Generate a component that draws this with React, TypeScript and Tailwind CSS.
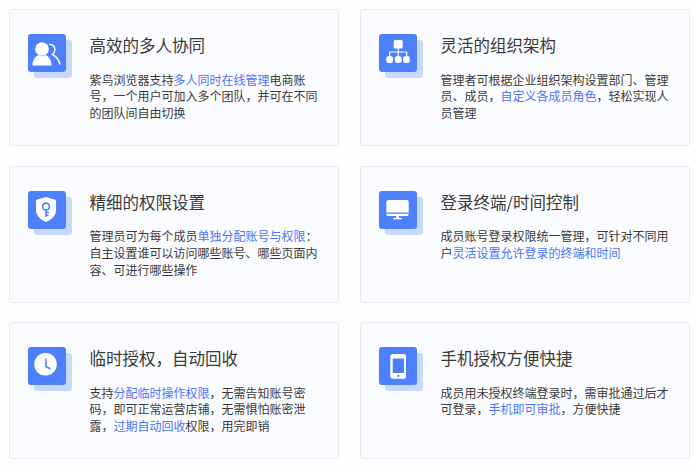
import React from 'react';

type Seg = { t: string; link?: boolean };
type Feature = { title: string; icon: React.ReactNode; lines: Seg[][]; };

const UsersIcon = (
  <svg viewBox="0 0 38 38" className="h-[38px] w-[38px]">
    <circle cx="14" cy="15" r="6.8" fill="#fff" />
    <path d="M4.500 31.500c0-5.500 2.500-9 6-10.500 2 1.500 5 1.500 7 0 3.500 1.500 6 5 6 10.500z" fill="#fff" />
    <path d="M21.500 10.500c3.500-.5 5.500 2.500 5.500 5 0 2.500-1.500 4-2.500 5 3.500 2 6.500 5.500 7.500 10" fill="none" stroke="#fff" strokeWidth="1.500" />
  </svg>
);

const OrgIcon = (
  <svg viewBox="0 0 38 38" className="h-[38px] w-[38px]">
    <rect x="14.700" y="6" width="9" height="8.500" rx="1.500" fill="#fff" />
    <path d="M19.200 14v8M10.700 23v-5h17v5" fill="none" stroke="#fff" strokeWidth="1.100" />
    <rect x="7.300" y="22" width="6.800" height="7" rx="2.800" fill="#fff" />
    <rect x="15.800" y="22" width="6.800" height="7" rx="2.800" fill="#fff" />
    <rect x="24" y="22" width="6.800" height="7" rx="2.800" fill="#fff" />
  </svg>
);

const ShieldIcon = (
  <svg viewBox="0 0 38 38" className="h-[38px] w-[38px]">
    <path d="M18 6l10 3v10c0 6-4.500 9.500-10 12-5.500-2.500-10-6-10-12V9z" fill="#fff" />
    <circle cx="18" cy="15.500" r="3.400" fill="none" stroke="#4d80ff" strokeWidth="1.600" />
    <path d="M18 19v7M18 21.500h3M18 24.200h2.500" fill="none" stroke="#4d80ff" strokeWidth="1.500" />
  </svg>
);

const MonitorIcon = (
  <svg viewBox="0 0 38 38" className="h-[38px] w-[38px]">
    <path d="M9.300 9h18.400a2 2 0 0 1 2 2v10.500H7.300V11a2 2 0 0 1 2-2z" fill="#fff" />
    <path d="M7.300 22.700h22.400v.3a2 2 0 0 1-2 2H9.300a2 2 0 0 1-2-2z" fill="#fff" />
    <rect x="17" y="25" width="3" height="2" fill="#fff" />
    <rect x="14.300" y="27" width="8.400" height="1.300" fill="#fff" />
  </svg>
);

const ClockIcon = (
  <svg viewBox="0 0 38 38" className="h-[38px] w-[38px]">
    <circle cx="17.500" cy="17.200" r="11.300" fill="#fff" />
    <path d="M18 11.500v8l4.500 2.500" fill="none" stroke="#4d80ff" strokeWidth="1.500" />
  </svg>
);

const PhoneIcon = (
  <svg viewBox="0 0 38 38" className="h-[38px] w-[38px]">
    <rect x="11.300" y="7" width="15.700" height="24.700" rx="2.500" fill="#fff" />
    <rect x="13.700" y="11.500" width="11.300" height="14.500" fill="#4d80ff" />
    <rect x="18.300" y="28" width="2" height="1.800" fill="#4d80ff" />
  </svg>
);

const features: Feature[] = [
  {
    title: '高效的多人协同',
    icon: UsersIcon,
    lines: [
      [{ t: '紫鸟浏览器支持' }, { t: '多人同时在线管理', link: true }, { t: '电商账' }],
      [{ t: '号，一个用户可加入多个团队，并可在不同' }],
      [{ t: '的团队间自由切换' }],
    ],
  },
  {
    title: '灵活的组织架构',
    icon: OrgIcon,
    lines: [
      [{ t: '管理者可根据企业组织架构设置部门、管理' }],
      [{ t: '员、成员，' }, { t: '自定义各成员角色', link: true }, { t: '，轻松实现人' }],
      [{ t: '员管理' }],
    ],
  },
  {
    title: '精细的权限设置',
    icon: ShieldIcon,
    lines: [
      [{ t: '管理员可为每个成员' }, { t: '单独分配账号与权限', link: true }, { t: '：' }],
      [{ t: '自主设置谁可以访问哪些账号、哪些页面内' }],
      [{ t: '容、可进行哪些操作' }],
    ],
  },
  {
    title: '登录终端/时间控制',
    icon: MonitorIcon,
    lines: [
      [{ t: '成员账号登录权限统一管理，可针对不同用' }],
      [{ t: '户' }, { t: '灵活设置允许登录的终端和时间', link: true }],
    ],
  },
  {
    title: '临时授权，自动回收',
    icon: ClockIcon,
    lines: [
      [{ t: '支持' }, { t: '分配临时操作权限', link: true }, { t: '，无需告知账号密' }],
      [{ t: '码，即可正常运营店铺，无需惧怕账密泄' }],
      [{ t: '露，' }, { t: '过期自动回收', link: true }, { t: '权限，用完即销' }],
    ],
  },
  {
    title: '手机授权方便快捷',
    icon: PhoneIcon,
    lines: [
      [{ t: '成员用未授权终端登录时，需审批通过后才' }],
      [{ t: '可登录，' }, { t: '手机即可审批', link: true }, { t: '，方便快捷' }],
    ],
  },
];

const FeatureCard = ({ item }: { item: Feature }) => (
  <div className="flex h-[137px] w-[330px] rounded-[3px] border border-[#e9ebf3] bg-[#fbfcff] pl-[18px] pt-[24px]">
    <div className="relative h-[44px] w-[44px] shrink-0">
      <div className="absolute left-[6px] top-[6px] h-[38px] w-[38px] rounded-[3px] bg-[#c8d9ff]" />
      <div className="absolute left-0 top-0 flex h-[38px] w-[38px] items-center justify-center rounded-[3px] bg-[#4d80ff]">
        {item.icon}
      </div>
    </div>
    <div className="ml-[17.500px]">
      <h3 className="-mt-[1px] text-[16.500px] font-normal leading-[24px] text-[#3a3a3a]">{item.title}</h3>
      <div className="mt-[14.500px] text-[12px] leading-[16.800px] text-[#3a3a3a]">
        {item.lines.map((line, i) => (
          <p key={i} className="whitespace-nowrap">
            {line.map((seg, j) => (
              <span key={j} className={seg.link ? 'text-[#4c74ff]' : ''}>
                {seg.t}
              </span>
            ))}
          </p>
        ))}
      </div>
    </div>
  </div>
);

const App = () => {
  return (
    <div className="h-[472px] w-[696px] overflow-hidden bg-[#fefeff] pl-[9px] pt-[9px] font-['Noto_Sans_CJK_SC','Liberation_Sans',sans-serif]">
      <div className="grid grid-cols-[330px_330px] gap-x-[21px] gap-y-[19.500px]">
        {features.map((item) => (
          <FeatureCard key={item.title} item={item} />
        ))}
      </div>
    </div>
  );
};

export default App;
